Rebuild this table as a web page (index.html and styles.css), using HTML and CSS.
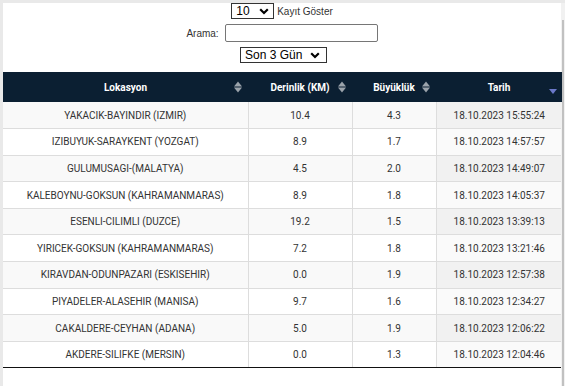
FILE: index.html
```html
<!DOCTYPE html>
<html lang="tr">
<head>
<meta charset="utf-8">
<link rel="stylesheet" href="styles.css">
</head>
<body>
<div class="frame">
  <div class="controls">
    <div class="line">
      <span class="selwrap sel-len">
        <select class="sel"><option>10</option></select>
        <svg class="chev" width="10" height="7" viewBox="0 0 10 7"><path d="M1.2 1.3 L5 5 L8.8 1.3" fill="none" stroke="#000" stroke-width="2.2"/></svg>
      </span>
      <span class="lbl">Kayıt Göster</span>
    </div>
    <div class="line">
      <span class="lbl">Arama:</span>
      <input class="search" type="text">
    </div>
    <div class="line">
      <span class="selwrap sel-day">
        <select class="sel"><option>Son 3 Gün</option></select>
        <svg class="chev" width="10" height="7" viewBox="0 0 10 7"><path d="M1.2 1.3 L5 5 L8.8 1.3" fill="none" stroke="#000" stroke-width="2.2"/></svg>
      </span>
    </div>
  </div>
  <table class="quakes">
    <colgroup>
      <col class="w-loc"><col class="w-dep"><col class="w-mag"><col class="w-date">
    </colgroup>
    <thead>
      <tr>
        <th>Lokasyon<span class="sort"><i class="up"></i><i class="dn"></i></span></th>
        <th>Derinlik (KM)<span class="sort"><i class="up"></i><i class="dn"></i></span></th>
        <th>Büyüklük<span class="sort"><i class="up"></i><i class="dn"></i></span></th>
        <th>Tarih<span class="sort desc"><i class="dn"></i></span></th>
      </tr>
    </thead>
    <tbody>
      <tr><td>YAKACIK-BAYINDIR (IZMIR)</td><td>10.4</td><td>4.3</td><td class="sorted">18.10.2023 15:55:24</td></tr>
      <tr><td>IZIBUYUK-SARAYKENT (YOZGAT)</td><td>8.9</td><td>1.7</td><td class="sorted">18.10.2023 14:57:57</td></tr>
      <tr><td>GULUMUSAGI-(MALATYA)</td><td>4.5</td><td>2.0</td><td class="sorted">18.10.2023 14:49:07</td></tr>
      <tr><td>KALEBOYNU-GOKSUN (KAHRAMANMARAS)</td><td>8.9</td><td>1.8</td><td class="sorted">18.10.2023 14:05:37</td></tr>
      <tr><td>ESENLI-CILIMLI (DUZCE)</td><td>19.2</td><td>1.5</td><td class="sorted">18.10.2023 13:39:13</td></tr>
      <tr><td>YIRICEK-GOKSUN (KAHRAMANMARAS)</td><td>7.2</td><td>1.8</td><td class="sorted">18.10.2023 13:21:46</td></tr>
      <tr><td>KIRAVDAN-ODUNPAZARI (ESKISEHIR)</td><td>0.0</td><td>1.9</td><td class="sorted">18.10.2023 12:57:38</td></tr>
      <tr><td>PIYADELER-ALASEHIR (MANISA)</td><td>9.7</td><td>1.6</td><td class="sorted">18.10.2023 12:34:27</td></tr>
      <tr><td>CAKALDERE-CEYHAN (ADANA)</td><td>5.0</td><td>1.9</td><td class="sorted">18.10.2023 12:06:22</td></tr>
      <tr><td>AKDERE-SILIFKE (MERSIN)</td><td>0.0</td><td>1.3</td><td class="sorted">18.10.2023 12:04:46</td></tr>
    </tbody>
  </table>
</div>
<div class="scrollbar"><div class="thumb"></div></div>
</body>
</html>
```

FILE: styles.css
```css
html, body {
  margin: 0;
  padding: 0;
  height: 386px;
  overflow: hidden;
}
body {
  background: #e9e9e9;
  display: flex;
  font-family: Roboto, "Liberation Sans", Arial, sans-serif;
  color: #333;
}
.frame {
  margin: 3px 0 0 3px;
  width: 558px;
  height: 383px;
  background: #fff;
  display: flex;
  flex-direction: column;
}
.scrollbar {
  width: 4px;
  background: #f1f1f1;
  margin-top: 3px;
  display: flex;
  justify-content: center;
}
.thumb {
  width: 2px;
  margin-top: 17px;
  height: 366px;
  background: #c1c1c1;
}
.controls {
  display: flex;
  flex-direction: column;
  align-items: center;
  gap: 5px;
  padding-top: 0;
}
.line {
  display: flex;
  align-items: center;
  gap: 3px;
}
.lbl {
  font-family: "Liberation Sans", Arial, sans-serif;
  font-size: 10px;
  color: #333;
}
.selwrap {
  position: relative;
  display: block;
  height: 16px;
}
.sel {
  -webkit-appearance: none;
  appearance: none;
  font-family: "Liberation Sans", Arial, sans-serif;
  font-size: 12px;
  color: #000;
  background: #fff;
  border: 1px solid #333;
  border-radius: 0;
  height: 16px;
  width: 100%;
  padding: 0 0 0 4px;
  margin: 0;
  line-height: 14px;
  outline: none;
  display: block;
}
.sel-len { width: 43px; }
.sel-day { width: 87px; margin-left: 3px; }
.sel-len .chev { right: 5px; }
.chev {
  position: absolute;
  right: 7px;
  top: 5px;
  pointer-events: none;
}
.search {
  width: 147px;
  height: 14px;
  border: 1px solid #767676;
  border-radius: 2px;
  padding: 1px 2px;
  margin: 0 0 0 3px;
}
.quakes {
  margin-top: 9px;
  width: 559px;
  border-collapse: collapse;
  font-size: 10px;
  table-layout: fixed;
}
.w-loc { width: 245px; }
.w-dep { width: 104px; }
.w-mag { width: 84px; }
.w-date { width: 126px; }
.quakes th {
  background: #0b1f32;
  color: #fff;
  font-weight: 700;
  font-size: 10px;
  height: 30px;
  padding: 0;
  position: relative;
  text-align: center;
}
.quakes td {
  height: 26.6px;
  padding: 0 4px;
  text-align: center;
  border-top: 1px solid #ddd;
  border-left: 1px solid #ddd;
  color: #333;
  box-sizing: border-box;
  white-space: nowrap;
}
.quakes td:first-child { border-left: none; }
.quakes tbody tr:first-child td { border-top: none; }
.quakes tbody tr:nth-child(odd) td { background: #f9f9f9; }
.quakes tbody tr:nth-child(odd) td.sorted { background: #f1f1f1; }
.quakes tbody tr:nth-child(even) td.sorted { background: #fafafa; }
.quakes tbody tr:last-child td { border-bottom: 1px solid #111; }
.sort {
  position: absolute;
  right: 6px;
  top: 50%;
  transform: translateY(-50%);
  display: flex;
  flex-direction: column;
  gap: 1px;
}
.sort i {
  display: block;
  width: 0;
  height: 0;
  border-left: 4px solid transparent;
  border-right: 4px solid transparent;
}
.sort .up { border-bottom: 5px solid #9ba3ab; }
.sort .dn { border-top: 5px solid #9ba3ab; }
.sort.desc { top: auto; bottom: 8px; transform: none; right: 5px; }
.sort.desc .dn { border-top-color: #6b78c8; }
```
